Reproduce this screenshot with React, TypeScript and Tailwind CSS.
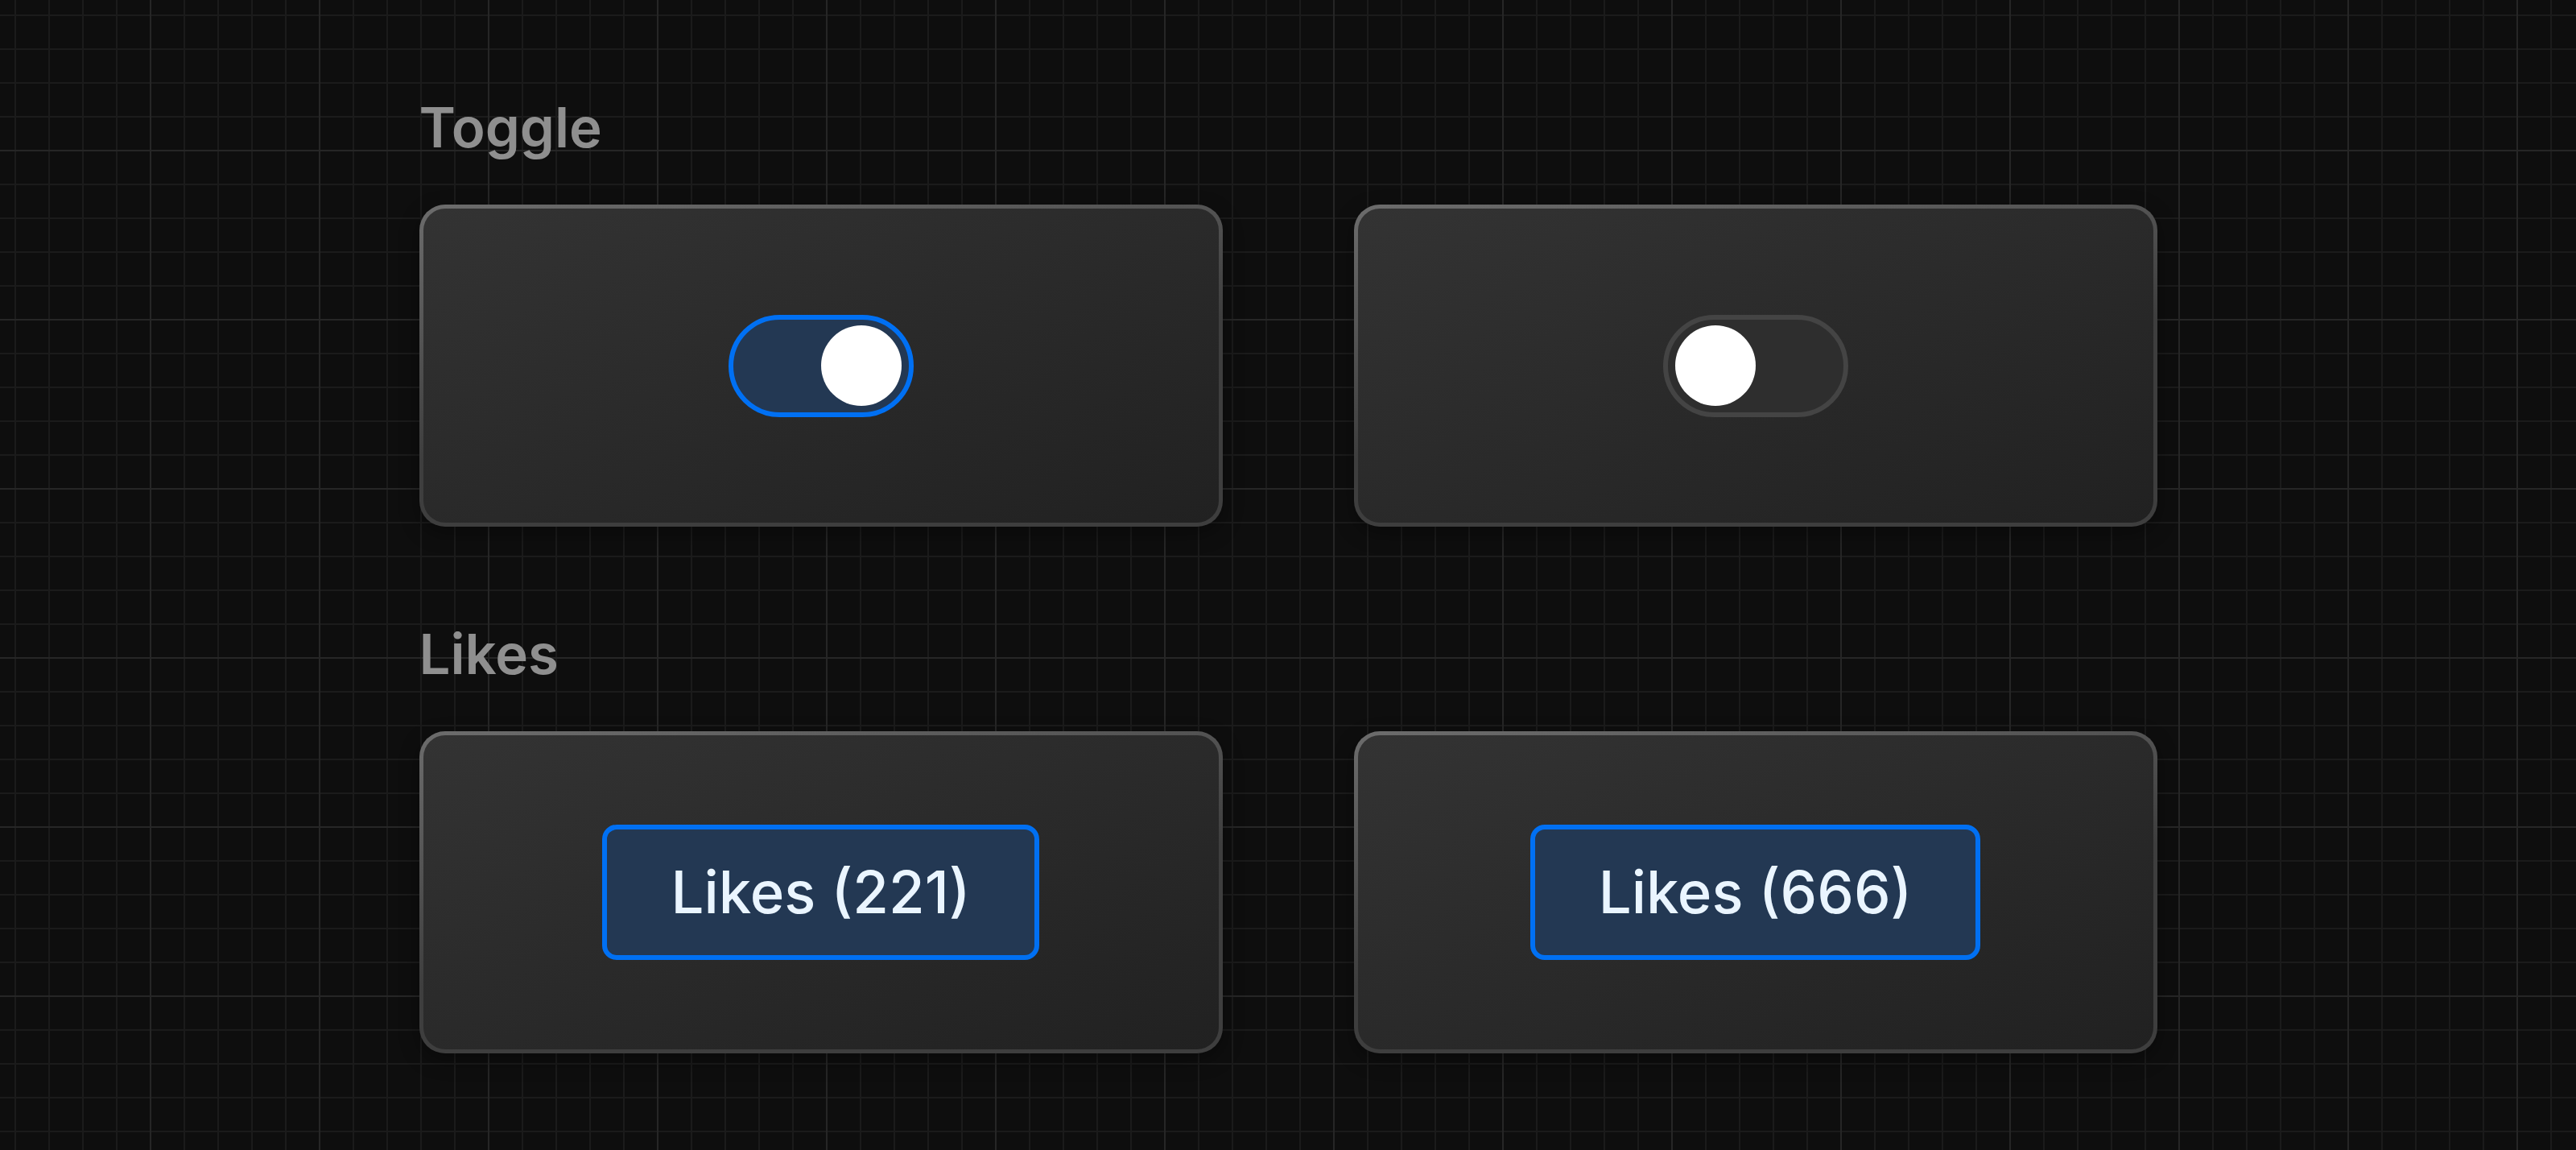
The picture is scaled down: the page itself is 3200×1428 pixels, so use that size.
import React from "react";

function Card({ children }: { children: React.ReactNode }) {
  return (
    <div className="h-[400px] rounded-[32px] p-[5px] bg-[linear-gradient(170deg,#6c6c6c,#3e3e3e_55%)] shadow-[0_8px_24px_rgba(0,0,0,0.35)]">
      <div className="flex h-full w-full items-center justify-center rounded-[27px] bg-[linear-gradient(160deg,#333333,#212121)]">
        {children}
      </div>
    </div>
  );
}

function Toggle({ on }: { on: boolean }) {
  return on ? (
    <div className="flex h-[127px] w-[230px] items-center justify-end rounded-full border-[6px] border-[#0070f3] bg-[#233853] pr-[9px]">
      <div className="h-[100px] w-[100px] rounded-full bg-white" />
    </div>
  ) : (
    <div className="flex h-[127px] w-[230px] items-center justify-start rounded-full border-[6px] border-[#444444] bg-[#2e2e2e] pl-[9px]">
      <div className="h-[100px] w-[100px] rounded-full bg-white" />
    </div>
  );
}

function LikeButton({ count }: { count: number }) {
  return (
    <div className="flex h-[168px] items-center rounded-[18px] border-[6px] border-[#0070f3] bg-[#233853] px-[79px] text-[72.5px] font-medium leading-none text-[#eaf5ff]">
      Likes ({count})
    </div>
  );
}

export default function App() {
  return (
    <div className="min-h-[1428px] w-full bg-[#0e0e0e] font-['Inter','Noto_Sans',sans-serif] [background-image:linear-gradient(to_right,#262626_0_2px,transparent_2px),linear-gradient(to_bottom,#262626_0_2px,transparent_2px),linear-gradient(to_right,#1b1b1b_0_2px,transparent_2px),linear-gradient(to_bottom,#1b1b1b_0_2px,transparent_2px)] [background-size:210px_210px,210px_210px,42px_42px,42px_42px] [background-position:186px_186px,186px_186px,18px_18px,18px_18px]">
      <div className="mx-auto w-[2159px] pt-[116px]">
        <h2 className="mb-[54px] text-[69px] font-semibold leading-[84px] text-[#8f8f8f]">Toggle</h2>
        <div className="grid grid-cols-2 gap-x-[163px]">
          <Card>
            <Toggle on />
          </Card>
          <Card>
            <Toggle on={false} />
          </Card>
        </div>
        <h2 className="mb-[54px] mt-[116px] text-[69px] font-semibold leading-[84px] text-[#8f8f8f]">Likes</h2>
        <div className="grid grid-cols-2 gap-x-[163px]">
          <Card>
            <LikeButton count={221} />
          </Card>
          <Card>
            <LikeButton count={666} />
          </Card>
        </div>
      </div>
    </div>
  );
}
